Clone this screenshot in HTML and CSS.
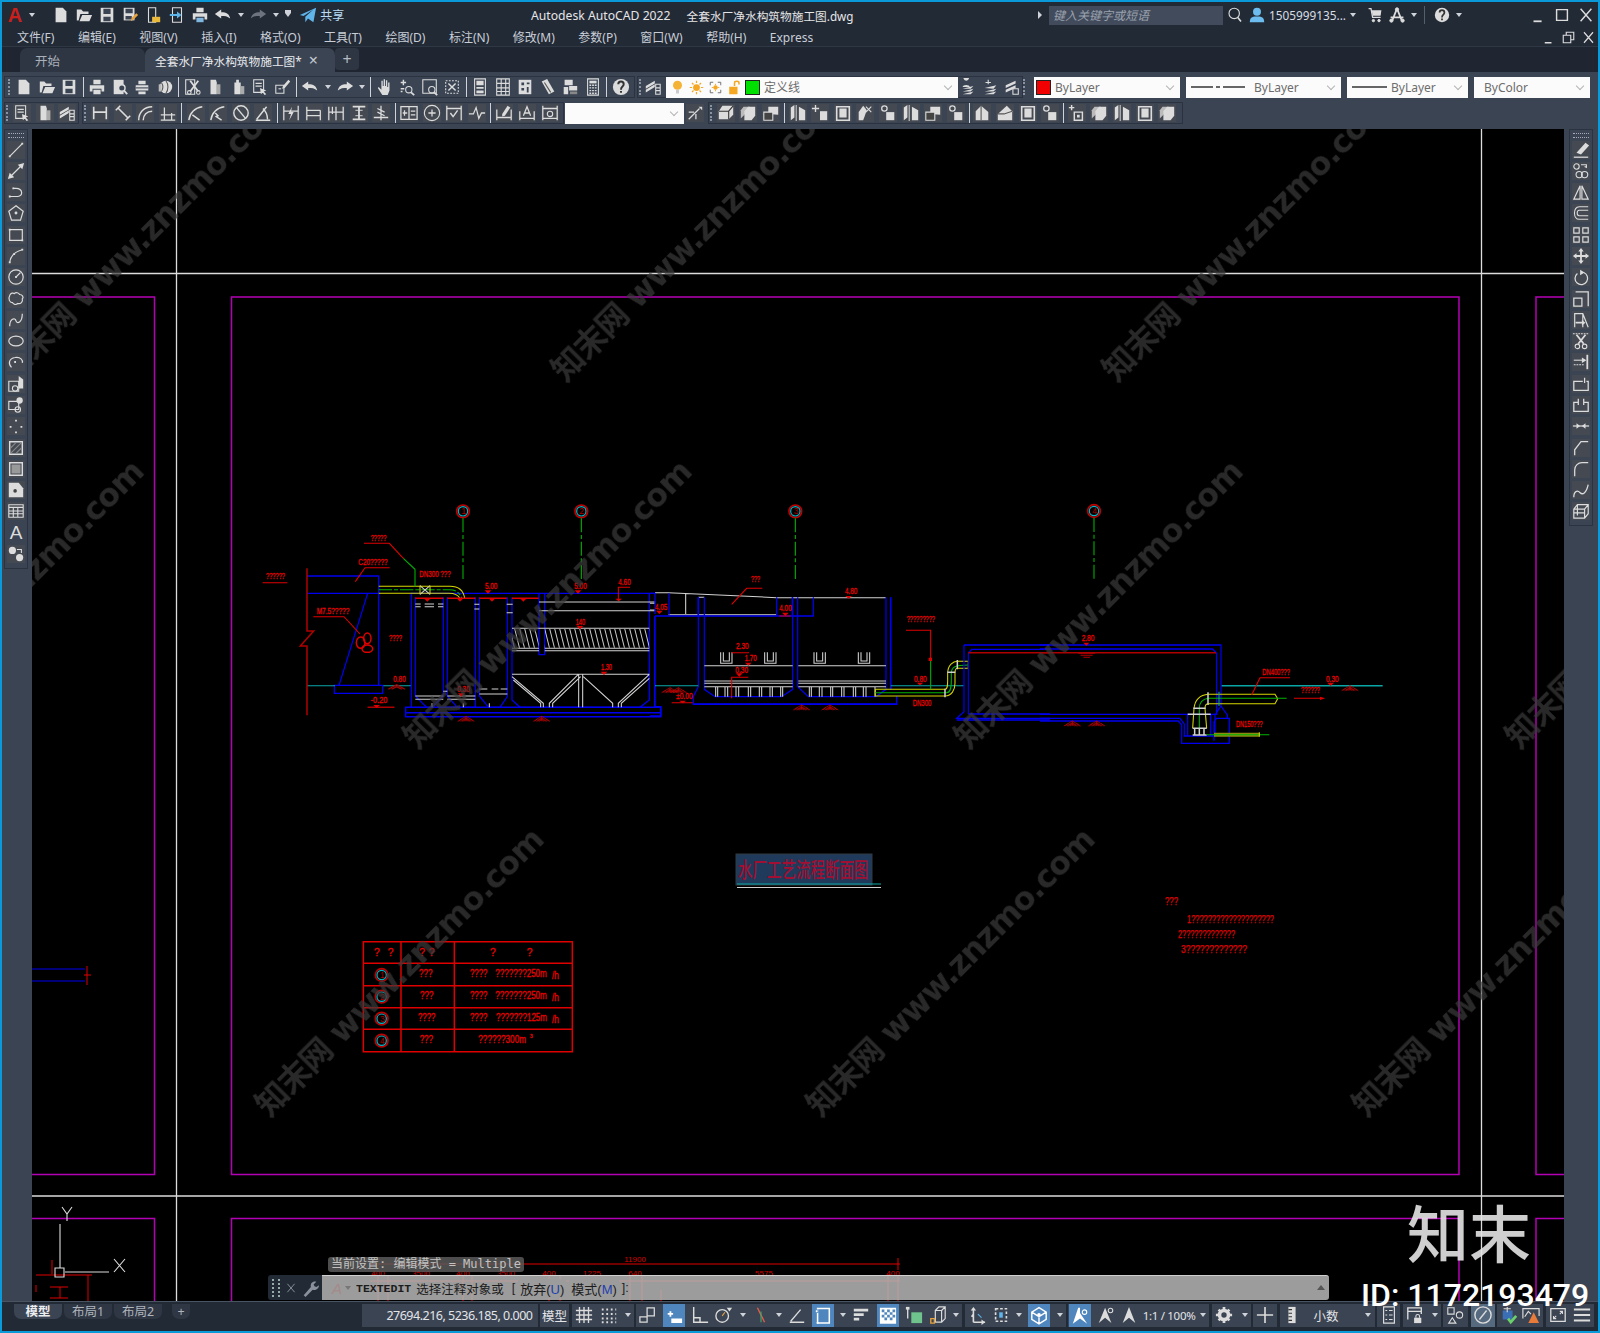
FILE: index.html
```html
<!DOCTYPE html>
<html lang="zh">
<head>
    <meta charset="UTF-8">
    <title>Autodesk AutoCAD 2022</title>
    <link rel="stylesheet" href="styles.css">
</head>
<body>
<svg class="defs" width="0" height="0">
    <symbol id="new" viewBox="0 0 20 20"><path fill="currentColor" stroke="none" d="M4 2h8l4 4v12H4z"/></symbol>
    <symbol id="open" viewBox="0 0 20 20"><path fill="currentColor" stroke="none" d="M2 16V4h5l2 2h6v3H6l-2 7zM5 17l3-7h11l-3 7z"/></symbol>
    <symbol id="save" viewBox="0 0 20 20"><path fill="currentColor" stroke="none" d="M3 2h14v16H3z"/><path fill="#3b4453" stroke="none" d="M6 3h8v6H6zM6 12h8v5H6z"/></symbol>
    <symbol id="saveas" viewBox="0 0 20 20"><path fill="currentColor" stroke="none" d="M3 2h12v14H3z"/><path fill="#3b4453" stroke="none" d="M5 3h8v5H5zM5 11h7v4H5z"/><path fill="#e8a33a" stroke="none" d="M11 17l1-4 5-5 2 2-5 5z"/></symbol>
    <symbol id="webopen" viewBox="0 0 20 20"><path d="M5 2h8v16H5z"/><path fill="#e8b93a" stroke="none" d="M9 12h9v6H9z"/></symbol>
    <symbol id="websave" viewBox="0 0 20 20"><path d="M5 2h10v16H5z"/><path fill="#5fb4ea" stroke="none" d="M2 9h8V6l5 4-5 4v-3H2z"/></symbol>
    <symbol id="print" viewBox="0 0 20 20"><path fill="currentColor" stroke="none" d="M6 2h8v5H6zM2 8h16v7h-3v-3H5v3H2z"/><path fill="#7fb6e0" stroke="none" d="M6 13h8v5H6z"/></symbol>
    <symbol id="printw" viewBox="0 0 20 20"><path fill="currentColor" stroke="none" d="M6 2h8v5H6zM2 8h16v7h-3v-3H5v3H2zM6 13h8v5H6z"/></symbol>
    <symbol id="undo" viewBox="0 0 20 20"><path fill="currentColor" stroke="none" d="M1 9l7-5v3c6 0 9 2 10 7-3-3-6-3-10-3v3z"/></symbol>
    <symbol id="redo" viewBox="0 0 20 20"><path fill="currentColor" stroke="none" d="M19 9l-7-5v3C6 7 3 9 2 14c3-3 6-3 10-3v3z"/></symbol>
    <symbol id="share" viewBox="0 0 20 20"><path fill="#5fb4ea" stroke="none" d="M1 10L19 2l-3 16-6-4-3 4v-6l9-8-11 7z"/></symbol>
    <symbol id="preview" viewBox="0 0 20 20"><path fill="currentColor" stroke="none" d="M3 2h11v16H3z"/><circle cx="12" cy="11" r="3.6" fill="#3b4453" stroke-width="1.6"/><path stroke-width="2" d="M14.5 14l3.5 4"/></symbol>
    <symbol id="plot" viewBox="0 0 20 20"><path fill="currentColor" stroke="none" d="M3 8h14v6H3zM6 3h8v4H6zM6 15h8v3H6z"/><path stroke="#3b4453" d="M3 11h14"/></symbol>
    <symbol id="publish" viewBox="0 0 20 20"><circle cx="11" cy="10" r="7" fill="currentColor" stroke="none"/><path stroke="#555" d="M6 5c2 3 2 7 0 10M11 3c3 4 3 10 0 14"/><path fill="#bbb" stroke="none" d="M3 7h3v8H3z"/></symbol>
    <symbol id="cut" viewBox="0 0 20 20"><path d="M3 2h10v16H3z"/><path stroke-width="2" d="M8 3l9 12M17 3L8 15"/><circle cx="7" cy="16" r="2"/><circle cx="17" cy="16" r="2"/></symbol>
    <symbol id="copy" viewBox="0 0 20 20"><path fill="currentColor" stroke="none" d="M5 2h6l1 3v13H5z"/><path fill="#aaa" stroke="none" d="M12 7h4v11h-4z"/></symbol>
    <symbol id="paste" viewBox="0 0 20 20"><path fill="currentColor" stroke="none" d="M6 5h2V2h3v3h2v13H6z"/><path fill="#aaa" stroke="none" d="M13 9h4v9h-4z"/></symbol>
    <symbol id="match" viewBox="0 0 20 20"><path d="M3 2h11v14H3zM5 6h7M5 9h7"/><path fill="currentColor" stroke="none" d="M10 11l7 3-3 1 3 3-2 1-2-3-2 2z"/></symbol>
    <symbol id="matchp" viewBox="0 0 20 20"><path d="M2 8h9v9H2z"/><path d="M5 12h3"/><path fill="currentColor" stroke="none" d="M10 9l6-7 2 2-6 7-3 1z"/></symbol>
    <symbol id="pan" viewBox="0 0 20 20"><path fill="currentColor" stroke="none" d="M7 19L2 11l1-1 3 3V3h1.500v6H8.500V1.500H10V9h1V2.500h1.500V10h1V5H15v9l-2 5z"/></symbol>
    <symbol id="zoomr" viewBox="0 0 20 20"><path stroke-width="1.600" d="M6 2v6M3 5h6M3 12h4M3 15h2"/><circle cx="12" cy="13" r="3.500"/><path stroke-width="2" d="M14.500 16l3.500 3"/></symbol>
    <symbol id="zoomw" viewBox="0 0 20 20"><path d="M2 2h15v15H2z"/><circle cx="12" cy="13" r="3.500"/><path stroke-width="2" d="M14.500 16l3.500 3"/></symbol>
    <symbol id="zoome" viewBox="0 0 20 20"><path stroke-dasharray="2 1.500" d="M3 3h14v14H3z"/><path stroke-width="1.600" d="M6 6l8 8M14 6l-8 8"/></symbol>
    <symbol id="props" viewBox="0 0 20 20"><path d="M4 1h12v18H4z"/><path fill="currentColor" stroke="none" d="M6 3h8v5H6zM6 10h8v2H6zM6 14h8v3H6z"/></symbol>
    <symbol id="sheet" viewBox="0 0 20 20"><path d="M3 1h14v18H3zM8 1v18M13 1v18M3 6h14M3 11h14M3 15h14"/></symbol>
    <symbol id="palette" viewBox="0 0 20 20"><path fill="currentColor" stroke="none" d="M3 2h14v16H3z"/><path fill="#3b4453" stroke="none" d="M6 5h3v3H6zM12 5h3v2h-3zM6 11h3v3H6zM12 10h2v6h-2z"/></symbol>
    <symbol id="markup" viewBox="0 0 20 20"><path fill="currentColor" stroke="none" d="M3 4l6-3 8 14-6 3z"/><path stroke="#555" d="M6 5l7 11"/></symbol>
    <symbol id="sset" viewBox="0 0 20 20"><path fill="currentColor" stroke="none" d="M4 2h9v6H4zM9 9h9v5H9zM3 10h5v8H3z"/><path fill="#888" stroke="none" d="M10 15h8v3h-8z"/></symbol>
    <symbol id="calc" viewBox="0 0 20 20"><path d="M4 1h12v18H4z"/><path stroke-width="1.600" stroke-dasharray="2 1" d="M6 8h8M6 11h8M6 14h8M6 17h8"/><path fill="currentColor" stroke="none" d="M6 3h8v3H6z"/></symbol>
    <symbol id="help" viewBox="0 0 20 20"><circle cx="10" cy="10" r="9" fill="currentColor" stroke="none"/><path fill="none" stroke="#333" stroke-width="2.200" d="M7 7c0-4 6-4 6 0 0 3-3 2-3 6"/><path stroke="#333" stroke-width="2.200" d="M10 14.500v2"/></symbol>
    <symbol id="layer" viewBox="0 0 20 20"><path fill="currentColor" stroke="none" d="M2 9l10-6v3L2 12zM2 13l10-6v3L2 16z"/><path d="M13 7h5v11h-5zM13 11h5M13 14h5"/></symbol>
    <symbol id="lstack" viewBox="0 0 20 20"><path fill="currentColor" stroke="none" d="M4 12l12-3-3 3zM4 15l12-3-3 3zM4 18l12-3-3 3z"/><path fill="currentColor" stroke="none" d="M8 3a3 3 0 1 1 .1 0zM4 10c0-3 8-3 8 0z"/></symbol>
    <symbol id="lstack2" viewBox="0 0 20 20"><path fill="currentColor" stroke="none" d="M4 11l13-3-3 4zM4 15l13-3-3 3zM4 18l13-3-3 3z"/><path stroke="#ddd" d="M8 2v5M5 5h6"/></symbol>
    <symbol id="lstack3" viewBox="0 0 20 20"><path fill="currentColor" stroke="none" d="M3 8l11-5v3L3 11zM3 13l11-5v3L3 16z"/><path d="M11 12h6v6h-6z"/></symbol>
    <symbol id="bulb" viewBox="0 0 20 20"><circle cx="10" cy="7" r="6" fill="#f5b335" stroke="none"/><path fill="#ccc" stroke="none" d="M8 13h4v5H8z"/></symbol>
    <symbol id="sun" viewBox="0 0 20 20"><circle cx="10" cy="10" r="4.500" fill="#f5a623" stroke="none"/><path stroke="#f5a623" stroke-width="1.600" d="M10 1v3M10 16v3M1 10h3M16 10h3M4 4l2 2M14 14l2 2M4 16l2-2M14 6l2-2"/></symbol>
    <symbol id="vpfreeze" viewBox="0 0 20 20"><path stroke="#666" d="M3 7V3h4M13 3h4v4M17 13v4h-4M7 17H3v-4"/><circle cx="10" cy="10" r="3" fill="#f5a623" stroke="none"/><path stroke="#f5a623" d="M10 5v2M10 13v2M5 10h2M13 10h2"/></symbol>
    <symbol id="lock" viewBox="0 0 20 20"><path fill="#f5a623" stroke="none" d="M3 9h11v10H3z"/><path stroke="#f5a623" stroke-width="2" d="M10 8V4c0-3 6-3 6 0v2"/></symbol>
    <symbol id="dlin" viewBox="0 0 20 20"><path stroke-width="1.800" d="M3 3v14M17 3v14M3 9h14"/></symbol>
    <symbol id="dali" viewBox="0 0 20 20"><path stroke-width="1.800" d="M2 7l5-5M13 18l5-5M5 5l10 10"/></symbol>
    <symbol id="darc" viewBox="0 0 20 20"><path stroke-width="1.600" d="M3 18C3 9 9 3 18 3M8 18C8 12 12 8 18 8"/></symbol>
    <symbol id="dord" viewBox="0 0 20 20"><path stroke-width="1.400" d="M2 12h16M2 18h16M6 4v14M14 10v8"/></symbol>
    <symbol id="dradius" viewBox="0 0 20 20"><path stroke-width="1.600" d="M2 18C3 10 9 4 17 3M6 12l8 6"/></symbol>
    <symbol id="djog" viewBox="0 0 20 20"><path stroke-width="1.600" d="M2 18C3 10 9 4 17 3M7 10l3 3-2 1 6 4"/></symbol>
    <symbol id="ddia" viewBox="0 0 20 20"><circle cx="10" cy="10" r="8" stroke-width="1.600"/><path stroke-width="1.600" d="M5 4l10 12"/></symbol>
    <symbol id="dang" viewBox="0 0 20 20"><path stroke-width="1.600" d="M2 18h16M3 17L14 3M10 5c3 3 5 7 5 12"/></symbol>
    <symbol id="dquick" viewBox="0 0 20 20"><path stroke-width="1.400" d="M2 2v16M18 2v16M2 8h16"/><path fill="currentColor" stroke="none" d="M11 3l-4 8h3l-2 7 5-9h-3z"/></symbol>
    <symbol id="dbase" viewBox="0 0 20 20"><path stroke-width="1.400" d="M2 3v15M17 7v11M2 7h15M2 13h15"/></symbol>
    <symbol id="dcont" viewBox="0 0 20 20"><path stroke-width="1.400" d="M2 3v15M10 3v15M18 3v15M2 9h16M6 3v8"/></symbol>
    <symbol id="dspace" viewBox="0 0 20 20"><path stroke-width="2" d="M3 3h14M3 17h14M10 3v14"/><path stroke-width="1" d="M6 7h8M6 13h8"/></symbol>
    <symbol id="dbreak" viewBox="0 0 20 20"><path stroke-width="1.400" d="M2 15h16M10 2v16M6 5l8 4M6 9l8 4"/></symbol>
    <symbol id="tol" viewBox="0 0 20 20"><path stroke-width="1.400" d="M1 3h18v14H1zM10 3v14M3 10h5M5 7v6M12 8h5M12 12h5"/></symbol>
    <symbol id="center" viewBox="0 0 20 20"><circle cx="10" cy="10" r="8.500"/><path stroke-width="1.400" d="M10 6v8M6 10h8"/></symbol>
    <symbol id="inspect" viewBox="0 0 20 20"><path stroke-width="1.400" d="M2 2v16M18 2v16M2 5h16"/><path d="M6 10l3 4 5-7" stroke-width="1.600"/></symbol>
    <symbol id="jog" viewBox="0 0 20 20"><path stroke-width="1.400" d="M1 11h5l3-7 3 12 3-6h4"/></symbol>
    <symbol id="dedit" viewBox="0 0 20 20"><path stroke-width="1.400" d="M2 6v12M18 6v12M2 15h16"/><path fill="currentColor" stroke="none" d="M8 11l6-9 3 2-6 9-3 1z"/></symbol>
    <symbol id="dtext" viewBox="0 0 20 20"><path stroke-width="1.400" d="M2 8v10M18 8v10M2 16h16M6 13l4-10 4 10M7.500 10h5"/></symbol>
    <symbol id="dupd" viewBox="0 0 20 20"><path stroke-width="1.400" d="M2 2v16M18 2v16M2 5h16M2 16h16"/><circle cx="10" cy="11" r="3"/></symbol>
    <symbol id="dstyle" viewBox="0 0 20 20"><path stroke-width="1.400" d="M3 17l12-12M3 9h6M11 17v-6"/><path fill="currentColor" stroke="none" d="M14 3h4v4z"/></symbol>
    <symbol id="box3" viewBox="0 0 20 20"><path fill="currentColor" stroke="none" d="M2 17V8l4-6h12v10l-5 5z"/><path stroke="#333" d="M2 8h11v9M13 8l5-6"/></symbol>
    <symbol id="box3b" viewBox="0 0 20 20"><path fill="#bbb" stroke="none" d="M2 16V7l3-4h7l-1 4z"/><path fill="currentColor" stroke="none" d="M6 18V8l4-5h8v10l-4 5z"/></symbol>
    <symbol id="box3c" viewBox="0 0 20 20"><path fill="currentColor" stroke="none" d="M7 11V3h11v9z"/><path d="M2 18V9h10v9z" fill="#444"/></symbol>
    <symbol id="wedge" viewBox="0 0 20 20"><path fill="currentColor" stroke="none" d="M2 18V4l4-3v14zM11 18V3l7 4v11z"/><path stroke="#ccc" d="M8 1v18"/></symbol>
    <symbol id="boxplus" viewBox="0 0 20 20"><path stroke-width="1.600" d="M1 4h6M4 1v6M7 9h9v9H7z"/><path fill="currentColor" stroke="none" d="M10 12h3v3h-3z"/></symbol>
    <symbol id="movebox" viewBox="0 0 20 20"><path stroke-width="1.500" d="M5 1v8M1 5h8"/><path fill="currentColor" stroke="none" d="M10 8h8v10h-8z"/></symbol>
    <symbol id="rect3" viewBox="0 0 20 20"><path d="M3 3h14v15H3z" stroke-width="1.800"/><path fill="currentColor" stroke="none" d="M6 5h8v10H6z"/></symbol>
    <symbol id="cutbox" viewBox="0 0 20 20"><path fill="currentColor" stroke="none" d="M3 18V9l5-7 4 5-4 11z"/><path stroke="#ddd" d="M11 3l6 6M17 3l-6 6"/></symbol>
    <symbol id="rotbox" viewBox="0 0 20 20"><circle cx="6" cy="5" r="3" stroke-width="1.400"/><path fill="currentColor" stroke="none" d="M8 9h9v9H8z"/></symbol>
    <symbol id="round3" viewBox="0 0 20 20"><path fill="currentColor" stroke="none" d="M3 18V8l6-6 8 7v9z"/><path stroke="#555" d="M9 2v16"/></symbol>
    <symbol id="wedge2" viewBox="0 0 20 20"><path fill="currentColor" stroke="none" d="M2 18V11L12 2l6 6v10z"/><path stroke="#555" d="M2 11h7l9-3"/></symbol>
    <symbol id="ln" viewBox="0 0 20 20"><path stroke-width="1.300" d="M3 17L17 3"/><path fill="currentColor" stroke="none" d="M2 16h2v2H2zM16 2h2v2h-2z"/></symbol>
    <symbol id="xln" viewBox="0 0 20 20"><path stroke-width="1.300" d="M5 15L15 5"/><path fill="currentColor" stroke="none" d="M1 19l2-7 5 5zM19 1l-2 7-5-5z"/></symbol>
    <symbol id="pln" viewBox="0 0 20 20"><path stroke-width="1.300" d="M3 15h9c6 0 6-9-2-9H7"/><path fill="currentColor" stroke="none" d="M2 14h2v2H2zM6 5h2v2H6z"/></symbol>
    <symbol id="pgon" viewBox="0 0 20 20"><path stroke-width="1.300" d="M10 2l8 6-3 10H5L2 8z"/><circle cx="10" cy="10" r="1" fill="currentColor"/></symbol>
    <symbol id="rec" viewBox="0 0 20 20"><path stroke-width="1.300" d="M3 4h14v12H3z"/><path fill="currentColor" stroke="none" d="M2 3h2v2H2zM16 15h2v2h-2z"/></symbol>
    <symbol id="arc" viewBox="0 0 20 20"><path stroke-width="1.300" d="M3 17C4 10 9 5 17 3"/><path fill="currentColor" stroke="none" d="M2 16h2v2H2zM7 7h2v2H7zM16 2h2v2h-2z"/></symbol>
    <symbol id="cir" viewBox="0 0 20 20"><circle cx="10" cy="10" r="8" stroke-width="1.300"/><path d="M10 10l5-5"/><path fill="currentColor" stroke="none" d="M9 9h2v2H9z"/></symbol>
    <symbol id="cloud" viewBox="0 0 20 20"><path stroke-width="1.300" d="M3 6c1-3 4-3 5-2 2-2 5-1 6 1 3 0 5 3 3 5 1 3-2 6-5 5-2 2-5 1-6-1-3 0-5-4-3-8z"/></symbol>
    <symbol id="spl" viewBox="0 0 20 20"><path stroke-width="1.300" d="M3 17C3 8 9 7 10 11s7 2 7-8"/></symbol>
    <symbol id="ell" viewBox="0 0 20 20"><ellipse cx="10" cy="10" rx="8" ry="5.500" stroke-width="1.300"/></symbol>
    <symbol id="ellarc" viewBox="0 0 20 20"><path stroke-width="1.300" d="M5 16C1 12 2 6 9 5c6-1 9 3 8 6"/><path fill="currentColor" stroke="none" d="M8 9h2v2H8z"/></symbol>
    <symbol id="insert" viewBox="0 0 20 20"><path d="M2 7h11v11H2z"/><path fill="currentColor" stroke="none" d="M13 1l5 4v10h-5z"/><circle cx="9" cy="15" r="3"/></symbol>
    <symbol id="mkblock" viewBox="0 0 20 20"><path d="M2 6h11v9H2z"/><circle cx="14" cy="5" r="3.500" fill="currentColor" stroke="none"/><circle cx="12" cy="15" r="3"/></symbol>
    <symbol id="pts" viewBox="0 0 20 20"><path fill="currentColor" stroke="none" d="M9 3h2v2H9zM3 10h2v2H3zM15 10h2v2h-2zM9 16h2v2H9z"/></symbol>
    <symbol id="hatch" viewBox="0 0 20 20"><path d="M3 3h14v14H3z" stroke-width="1.600"/><path stroke="#888" d="M4 10l6-6M4 16L16 4M10 16l6-6"/></symbol>
    <symbol id="grad" viewBox="0 0 20 20"><path d="M3 3h14v14H3z" stroke-width="1.600"/><path fill="#999" stroke="none" d="M5 5h10v10H5z"/></symbol>
    <symbol id="region" viewBox="0 0 20 20"><path fill="currentColor" stroke="none" d="M2 2h11l5 6v10H2z"/><circle cx="9" cy="11" r="2" fill="#444" stroke="none"/></symbol>
    <symbol id="table" viewBox="0 0 20 20"><path d="M2 3h16v14H2zM2 6h16M2 10h16M2 13h16M7 6v11M12 6v11" stroke-width="1.200"/></symbol>
    <symbol id="attr" viewBox="0 0 20 20"><circle cx="6" cy="6" r="4" fill="currentColor" stroke="none"/><circle cx="14" cy="14" r="4" fill="currentColor" stroke="none"/><path d="M11 5h5v4"/></symbol>
    <symbol id="erase" viewBox="0 0 20 20"><path fill="currentColor" stroke="none" d="M5 13L15 2l4 3-9 10z"/><path stroke-width="1.400" d="M2 18h16"/></symbol>
    <symbol id="cpy" viewBox="0 0 20 20"><circle cx="5" cy="5" r="3"/><path d="M10 3h6v3l-2-1"/><circle cx="8" cy="14" r="3.500"/><circle cx="14" cy="14" r="3.500"/></symbol>
    <symbol id="mirror" viewBox="0 0 20 20"><path stroke-width="1.300" d="M9 3L2 18h7zM11 3l7 15h-7z"/></symbol>
    <symbol id="offs" viewBox="0 0 20 20"><path stroke-width="1.200" d="M18 3H8C1 3 1 17 8 17h10M18 7H8c-3 0-3 6 0 6h10"/></symbol>
    <symbol id="arr" viewBox="0 0 20 20"><path stroke-width="1.300" d="M2 2h6v6H2zM12 2h6v6h-6zM2 12h6v6H2zM12 12h6v6h-6z"/></symbol>
    <symbol id="mv" viewBox="0 0 20 20"><path fill="currentColor" stroke="none" d="M10 1l3 4h-2v4h4V7l4 3-4 3v-2h-4v4h2l-3 4-3-4h2v-4H5v2l-4-3 4-3v2h4V5H7z"/></symbol>
    <symbol id="rot" viewBox="0 0 20 20"><path stroke-width="1.400" d="M13 5a7 7 0 1 1-7 1"/><path fill="currentColor" stroke="none" d="M9 2l5 3-5 3z"/></symbol>
    <symbol id="scl" viewBox="0 0 20 20"><path stroke-width="1.400" d="M2 9h9v9H2zM4 2h14v16"/></symbol>
    <symbol id="stretch" viewBox="0 0 20 20"><path stroke-width="1.300" d="M3 18V3h9l6 15M12 3v15"/><path fill="currentColor" stroke="none" d="M4 12h7v-2l4 3-4 3v-2H4z"/></symbol>
    <symbol id="trm" viewBox="0 0 20 20"><path stroke-dasharray="2 1" d="M1 2h18"/><path stroke-width="2" d="M5 3l8 10M15 3L7 13"/><circle cx="6" cy="16" r="2.500"/><circle cx="14" cy="16" r="2.500"/></symbol>
    <symbol id="ext" viewBox="0 0 20 20"><path stroke-width="2" d="M17 2v16"/><path stroke-dasharray="2 1" d="M2 13h12"/><path d="M2 8h10"/><path fill="currentColor" stroke="none" d="M11 5l5 3-5 3z"/></symbol>
    <symbol id="brk" viewBox="0 0 20 20"><path stroke-width="1.400" d="M12 7H2v10h16V7h-2M14 3v6"/></symbol>
    <symbol id="brk2" viewBox="0 0 20 20"><path stroke-width="1.400" d="M7 7H2v10h16V7h-5M7 3v7M13 3v7"/></symbol>
    <symbol id="jn" viewBox="0 0 20 20"><path stroke-width="1.400" d="M1 10h18"/><path fill="currentColor" stroke="none" d="M5 7l4 3-4 3zM15 7l-4 3 4 3z"/></symbol>
    <symbol id="chm" viewBox="0 0 20 20"><path stroke-width="1.400" d="M3 18v-6l7-9h8"/></symbol>
    <symbol id="flt" viewBox="0 0 20 20"><path stroke-width="1.400" d="M3 18v-7c0-5 4-8 8-8h7"/></symbol>
    <symbol id="blnd" viewBox="0 0 20 20"><path stroke-width="1.400" d="M2 18c0-7 4-8 7-5s7 0 9-9"/></symbol>
    <symbol id="expl" viewBox="0 0 20 20"><path stroke-width="1.300" d="M2 8l4-5h12v10l-4 5H2zM2 8h12v10M14 8l4-5"/><path stroke-width="1.300" d="M6 3v12M2 12h12"/></symbol>
    <symbol id="grid" viewBox="0 0 20 20"><path stroke-width="1.500" d="M5 1v18M10 1v18M15 1v18M1 5h18M1 10h18M1 15h18"/></symbol>
    <symbol id="snap" viewBox="0 0 20 20"><path stroke-width="2.200" stroke-dasharray="2 3" d="M2 4h16M2 9h16M2 14h16M2 18h16"/></symbol>
    <symbol id="infer" viewBox="0 0 20 20"><path stroke-width="1.400" d="M1 18h8v-6H1zM9 12V2h8v9H9"/></symbol>
    <symbol id="dyn" viewBox="0 0 20 20"><path stroke-width="2" d="M3 8h6M6 5v6"/><path fill="currentColor" stroke="none" d="M7 13h12v5H7z"/></symbol>
    <symbol id="ortho" viewBox="0 0 20 20"><path stroke-width="1.600" d="M3 1v17h16M3 13h7v5"/></symbol>
    <symbol id="polar" viewBox="0 0 20 20"><circle cx="8" cy="11" r="7" stroke-width="1.500"/><path stroke="#e8a33a" d="M8 11l3-4"/><path fill="currentColor" stroke="none" d="M13 2h6l-3 4z"/></symbol>
    <symbol id="iso" viewBox="0 0 20 20"><path stroke="#e85b4a" stroke-width="1.500" d="M6 2l8 16"/><path stroke="#3fae6a" d="M10 6v12"/></symbol>
    <symbol id="osnap" viewBox="0 0 20 20"><path stroke-width="1.500" d="M2 18h16M3 17L14 4"/></symbol>
    <symbol id="ortho3" viewBox="0 0 20 20"><path stroke-width="1.700" d="M4 2h13v16H4z"/><path fill="#4f86bd" stroke="none" d="M1 3h4v4H1z"/><path fill="#fff" stroke="none" d="M2 4h2v2H2zM3 17h2v2H3z"/></symbol>
    <symbol id="lw" viewBox="0 0 20 20"><path fill="currentColor" stroke="none" d="M2 3h16v3H2zM2 8h11v3H2zM2 13h6v3H2z"/></symbol>
    <symbol id="trans" viewBox="0 0 20 20"><path fill="currentColor" stroke="none" d="M1 1h18v18H1z"/><path fill="#4f86bd" stroke="none" d="M3 3h3v3H3zM9 3h3v3H9zM15 3h3v3h-3zM6 6h3v3H6zM12 6h3v3h-3zM3 9h3v3H3zM9 9h3v3H9zM15 9h3v3h-3zM6 12h3v3H6zM12 12h3v3h-3z"/></symbol>
    <symbol id="cycle" viewBox="0 0 20 20"><path fill="#6fc38c" stroke="none" d="M7 7h12v12H7z"/><path stroke-width="1.500" d="M3 2v12"/><path fill="currentColor" stroke="none" d="M1 1h4v3H1z"/></symbol>
    <symbol id="obj3" viewBox="0 0 20 20"><path stroke-width="1.300" d="M7 5l4-4h7v13l-4 4H7zM7 5h7v13M14 5l4-4"/><path stroke="#e8a33a" stroke-width="1.500" d="M2 14h4v5H2z"/></symbol>
    <symbol id="dynucs" viewBox="0 0 20 20"><path stroke-width="1.800" d="M6 18V3M6 18h13M6 9l-2 3"/><path fill="currentColor" stroke="none" d="M6 1l3 4H3zM19 18l-4 3v-6z"/><path stroke="#5fb4ea" d="M11 9l4 4"/></symbol>
    <symbol id="sel" viewBox="0 0 20 20"><path stroke-width="1.800" stroke-dasharray="3 2" d="M4 3h12v14H4z"/><path fill="#5fb4ea" stroke="none" d="M8 7h4v6H8z"/></symbol>
    <symbol id="gizmo" viewBox="0 0 20 20"><path stroke-width="1.600" d="M10 1l8 5v8l-8 5-8-5V6zM2 6l8 5 8-5M10 11v8"/><circle cx="10" cy="9" r="2" fill="currentColor" stroke="none"/></symbol>
    <symbol id="annos" viewBox="0 0 20 20"><path fill="currentColor" stroke="none" d="M8 1h2v6l8 12-8-6-8 6z"/><circle cx="15" cy="6" r="2.500"/></symbol>
    <symbol id="annos2" viewBox="0 0 20 20"><path fill="currentColor" stroke="none" d="M9 2l7 17-7-6-7 6z"/><circle cx="15" cy="5" r="2.500"/></symbol>
    <symbol id="annos3" viewBox="0 0 20 20"><path fill="currentColor" stroke="none" d="M10 1l7 18-7-6-7 6z"/></symbol>
    <symbol id="gear" viewBox="0 0 20 20"><circle cx="10" cy="10" r="5" stroke-width="4"/><path stroke-width="3" d="M10 1v3M10 16v3M1 10h3M16 10h3M4 4l2 2M14 14l2 2M4 16l2-2M14 6l2-2"/></symbol>
    <symbol id="plus" viewBox="0 0 20 20"><path stroke-width="1.800" d="M10 1v18M1 10h18"/></symbol>
    <symbol id="ruler" viewBox="0 0 20 20"><path fill="currentColor" stroke="none" d="M6 1h8v18H6z"/><path stroke="#333" d="M6 4h4M6 8h4M6 12h4M6 16h4"/></symbol>
    <symbol id="qprops" viewBox="0 0 20 20"><path stroke-width="1.300" d="M4 1h12v18H4zM6 5h2M10 5h4M6 10h2M10 10h4M6 15h2M10 15h4"/></symbol>
    <symbol id="lockui" viewBox="0 0 20 20"><path stroke-width="1.500" d="M2 15V2h15v7M2 6h15"/><path fill="currentColor" stroke="none" d="M9 13h8v6H9z"/><path d="M11 13v-2c0-2 4-2 4 0v2"/></symbol>
    <symbol id="isolate" viewBox="0 0 20 20"><path stroke-width="1.200" d="M2 2h7v7H2zM7 13l-4 6h8z"/><circle cx="15" cy="10" r="3.500"/></symbol>
    <symbol id="hw" viewBox="0 0 20 20"><circle cx="10" cy="10" r="9" stroke-width="1.600"/><path stroke-width="1.500" d="M6 15l8-10"/></symbol>
    <symbol id="net" viewBox="0 0 20 20"><path fill="#3a6fb5" stroke="none" d="M3 5h11v10H3z"/><path stroke="#ddd" d="M8 1v6M4 3h8"/><path stroke="#6bd06b" stroke-width="3" d="M9 14l3 4 6-7"/></symbol>
    <symbol id="warn" viewBox="0 0 20 20"><path stroke-width="1.300" d="M1 14V3h18v8"/><path stroke-width="1.300" d="M3 12l4-6 3 3"/><path fill="#e87a3a" stroke="none" d="M13 7l6 12H7z"/></symbol>
    <symbol id="full" viewBox="0 0 20 20"><path stroke-width="1.400" d="M2 3h16v14H2z"/><path stroke-width="1.200" d="M5 14l3-3M5 11v3h3M15 6l-3 3M12 6h3v3"/></symbol>
    <symbol id="burger" viewBox="0 0 20 20"><path stroke-width="2.200" d="M1 4h18M1 10h18M1 16h18"/></symbol>
    <symbol id="search" viewBox="0 0 20 20"><circle cx="9" cy="8" r="6.500" stroke-width="1.400"/><path stroke-width="2" d="M13.500 13l4 5"/></symbol>
    <symbol id="user" viewBox="0 0 20 20"><circle cx="10" cy="6" r="5" fill="#6cbcf0" stroke="none"/><path fill="#6cbcf0" stroke="none" d="M1 19c0-7 5-7 9-7s9 0 9 7z"/></symbol>
    <symbol id="cart" viewBox="0 0 20 20"><path stroke-width="1.600" d="M2 2h3l2 11h10"/><path fill="currentColor" stroke="none" d="M6 4h12l-1 7H7z"/><circle cx="8" cy="17" r="1.500" fill="currentColor"/><circle cx="15" cy="17" r="1.500" fill="currentColor"/></symbol>
    <symbol id="connect" viewBox="0 0 20 20"><path stroke-width="2.200" d="M10 2L4 17M10 2l6 15M2 13h16"/><circle cx="10" cy="3" r="2" fill="currentColor"/><circle cx="3" cy="17" r="2" fill="currentColor"/><circle cx="17" cy="17" r="2" fill="currentColor"/></symbol>
    <symbol id="min" viewBox="0 0 20 20"><path stroke-width="2" d="M5 17h9"/></symbol>
    <symbol id="max" viewBox="0 0 20 20"><path stroke-width="1.600" d="M4 4h12v12H4z"/></symbol>
    <symbol id="close" viewBox="0 0 20 20"><path stroke-width="1.600" d="M4 3l12 14M16 3L4 17"/></symbol>
    <symbol id="restore" viewBox="0 0 20 20"><path stroke-width="1.500" d="M3 7h10v10H3zM7 7V3h10v10h-4"/></symbol>
    <symbol id="gnd" viewBox="0 0 50 16" overflow="visible"><path fill="none" stroke="#c80000" stroke-width="2.200" d="M0 16L25 1l25 15M9 16L25 6l16 10M18 16l7-5 7 5M25 1v15M13 16L25 8M37 16L25 8M4 16L12 8M46 16L38 8"/></symbol>
    <pattern id="tubes" width="15" height="60" patternUnits="userSpaceOnUse"><path d="M0 0L15 60M-15 0L0 60M15 0L30 60" stroke="#d0d0d0" stroke-width="3" fill="none"/></pattern>
</svg>

<div class="app">
    <header class="titlebar">
        <span class="logo">A</span><span class="caret"></span>
        <div class="qat">
            <svg class="ic"><use href="#new"/></svg>
            <svg class="ic"><use href="#open"/></svg>
            <svg class="ic"><use href="#save"/></svg>
            <svg class="ic"><use href="#saveas"/></svg>
            <svg class="ic"><use href="#webopen"/></svg>
            <svg class="ic"><use href="#websave"/></svg>
            <svg class="ic"><use href="#print"/></svg>
            <svg class="ic"><use href="#undo"/></svg><span class="caret"></span>
            <svg class="ic off"><use href="#redo"/></svg><span class="caret"></span>
            <span class="caret bar"></span>
            <svg class="ic"><use href="#share"/></svg>
            <span class="share">共享</span>
        </div>
        <div class="title"><span>Autodesk AutoCAD 2022</span><span class="title-doc">全套水厂净水构筑物施工图.dwg</span></div>
        <div class="infocenter">
            <span class="more"></span>
            <div class="search">键入关键字或短语</div>
            <svg class="ic"><use href="#search"/></svg>
            <svg class="ic"><use href="#user"/></svg>
            <span class="account">1505999135...</span><span class="caret"></span>
            <svg class="ic"><use href="#cart"/></svg>
            <svg class="ic"><use href="#connect"/></svg><span class="caret"></span>
            <span class="vsep"></span>
            <svg class="ic"><use href="#help"/></svg><span class="caret"></span>
            <div class="winbtns">
                <svg class="ic"><use href="#min"/></svg>
                <svg class="ic"><use href="#max"/></svg>
                <svg class="ic"><use href="#close"/></svg>
            </div>
        </div>
    </header>

    <nav class="menubar">
        <span>文件(F)</span><span>编辑(E)</span><span>视图(V)</span><span>插入(I)</span><span>格式(O)</span><span>工具(T)</span><span>绘图(D)</span><span>标注(N)</span><span>修改(M)</span><span>参数(P)</span><span>窗口(W)</span><span>帮助(H)</span><span>Express</span>
        <div class="docbtns">
            <svg class="ic"><use href="#min"/></svg>
            <svg class="ic"><use href="#restore"/></svg>
            <svg class="ic"><use href="#close"/></svg>
        </div>
    </nav>

    <div class="tabs">
        <div class="tab">开始</div>
        <div class="tab active">全套水厂净水构筑物施工图*<span class="x">×</span></div>
        <div class="tab-add">+</div>
    </div>

    <section class="toolbars">
        <div class="row">
            <div class="panel p-std">
                <svg class="ic"><use href="#new"/></svg>
                <svg class="ic"><use href="#open"/></svg>
                <svg class="ic"><use href="#save"/></svg>
                <span class="sep"></span>
                <svg class="ic"><use href="#printw"/></svg>
                <svg class="ic"><use href="#preview"/></svg>
                <svg class="ic"><use href="#plot"/></svg>
                <svg class="ic"><use href="#publish"/></svg>
                <span class="sep"></span>
                <svg class="ic"><use href="#cut"/></svg>
                <svg class="ic"><use href="#copy"/></svg>
                <svg class="ic"><use href="#paste"/></svg>
                <svg class="ic"><use href="#match"/></svg>
                <svg class="ic"><use href="#matchp"/></svg>
                <span class="sep"></span>
                <svg class="ic"><use href="#undo"/></svg><span class="caret"></span>
                <svg class="ic"><use href="#redo"/></svg><span class="caret"></span>
                <span class="sep"></span>
                <svg class="ic"><use href="#pan"/></svg>
                <svg class="ic"><use href="#zoomr"/></svg>
                <svg class="ic"><use href="#zoomw"/></svg>
                <svg class="ic"><use href="#zoome"/></svg>
                <span class="sep"></span>
                <svg class="ic"><use href="#props"/></svg>
                <svg class="ic"><use href="#sheet"/></svg>
                <svg class="ic"><use href="#palette"/></svg>
                <svg class="ic"><use href="#markup"/></svg>
                <svg class="ic"><use href="#sset"/></svg>
                <svg class="ic"><use href="#calc"/></svg>
                <span class="sep"></span>
                <svg class="ic"><use href="#help"/></svg>
            </div>
            <div class="panel p-layer">
                <svg class="ic"><use href="#layer"/></svg>
                <div class="combo layercombo">
                    <svg class="ic"><use href="#bulb"/></svg>
                    <svg class="ic"><use href="#sun"/></svg>
                    <svg class="ic"><use href="#vpfreeze"/></svg>
                    <svg class="ic"><use href="#lock"/></svg>
                    <span class="swatch green"></span>
                    <span>定义线</span>
                </div>
                <svg class="ic"><use href="#lstack"/></svg>
                <svg class="ic"><use href="#lstack2"/></svg>
                <svg class="ic"><use href="#lstack3"/></svg>
            </div>
            <div class="panel p-prop">
                <div class="combo c-color"><span class="swatch red"></span><span>ByLayer</span></div>
                <div class="combo c-ltype"><span class="dashline"></span><span>ByLayer</span></div>
                <div class="combo c-lw"><span class="solidline"></span><span>ByLayer</span></div>
                <div class="combo c-plot"><span>ByColor</span></div>
            </div>
        </div>
        <div class="row patch">
            <div class="panel p-dim1">
                <svg class="ic"><use href="#match"/></svg>
                <svg class="ic"><use href="#copy"/></svg>
                <svg class="ic"><use href="#layer"/></svg>
            </div>
            <div class="panel p-dim2">
                <svg class="ic"><use href="#dlin"/></svg>
                <svg class="ic"><use href="#dali"/></svg>
                <svg class="ic"><use href="#darc"/></svg>
                <svg class="ic"><use href="#dord"/></svg>
                <span class="sep"></span>
                <svg class="ic"><use href="#dradius"/></svg>
                <svg class="ic"><use href="#djog"/></svg>
                <svg class="ic"><use href="#ddia"/></svg>
                <svg class="ic"><use href="#dang"/></svg>
                <span class="sep"></span>
                <svg class="ic"><use href="#dquick"/></svg>
                <svg class="ic"><use href="#dbase"/></svg>
                <svg class="ic"><use href="#dcont"/></svg>
                <svg class="ic"><use href="#dspace"/></svg>
                <svg class="ic"><use href="#dbreak"/></svg>
                <span class="sep"></span>
                <svg class="ic"><use href="#tol"/></svg>
                <svg class="ic"><use href="#center"/></svg>
                <svg class="ic"><use href="#inspect"/></svg>
                <svg class="ic"><use href="#jog"/></svg>
                <span class="sep"></span>
                <svg class="ic"><use href="#dedit"/></svg>
                <svg class="ic"><use href="#dtext"/></svg>
                <svg class="ic"><use href="#dupd"/></svg>
            </div>
            <div class="combo c-dim"></div>
            <svg class="ic"><use href="#dstyle"/></svg>
            <div class="panel p-solid">
                <svg class="ic"><use href="#box3"/></svg>
                <svg class="ic"><use href="#box3b"/></svg>
                <svg class="ic"><use href="#box3c"/></svg>
                <span class="sep"></span>
                <svg class="ic"><use href="#wedge"/></svg>
                <svg class="ic"><use href="#movebox"/></svg>
                <svg class="ic"><use href="#rect3"/></svg>
                <svg class="ic"><use href="#cutbox"/></svg>
                <svg class="ic"><use href="#rotbox"/></svg>
                <svg class="ic"><use href="#wedge"/></svg>
                <svg class="ic"><use href="#box3c"/></svg>
                <svg class="ic"><use href="#rotbox"/></svg>
                <span class="sep"></span>
                <svg class="ic"><use href="#round3"/></svg>
                <svg class="ic"><use href="#wedge2"/></svg>
                <svg class="ic"><use href="#rect3"/></svg>
                <svg class="ic"><use href="#rotbox"/></svg>
                <span class="sep"></span>
                <svg class="ic"><use href="#boxplus"/></svg>
                <svg class="ic"><use href="#box3b"/></svg>
                <svg class="ic"><use href="#wedge"/></svg>
                <svg class="ic"><use href="#rect3"/></svg>
                <svg class="ic"><use href="#box3b"/></svg>
            </div>
        </div>
    </section>

    <main class="workspace">
        <aside class="sidebar left">
            <div class="sidepanel patch">
                <span class="grip"></span>
                <svg class="ic"><use href="#ln"/></svg>
                <svg class="ic"><use href="#xln"/></svg>
                <svg class="ic"><use href="#pln"/></svg>
                <svg class="ic"><use href="#pgon"/></svg>
                <svg class="ic"><use href="#rec"/></svg>
                <svg class="ic"><use href="#arc"/></svg>
                <svg class="ic"><use href="#cir"/></svg>
                <svg class="ic"><use href="#cloud"/></svg>
                <svg class="ic"><use href="#spl"/></svg>
                <svg class="ic"><use href="#ell"/></svg>
                <svg class="ic"><use href="#ellarc"/></svg>
                <svg class="ic"><use href="#insert"/></svg>
                <svg class="ic"><use href="#mkblock"/></svg>
                <svg class="ic"><use href="#pts"/></svg>
                <svg class="ic"><use href="#hatch"/></svg>
                <svg class="ic"><use href="#grad"/></svg>
                <svg class="ic"><use href="#region"/></svg>
                <svg class="ic"><use href="#table"/></svg>
                <span class="ic-a">A</span>
                <svg class="ic"><use href="#attr"/></svg>
            </div>
        </aside>

        <div class="canvas">
            <svg class="drawing" viewBox="32 129 1532 1172">
                <defs>
                    <text id="wm" class="wm-text">知末网 www.znzmo.com</text>
                </defs>
                <g class="frame">
                    <path class="white" d="M32 273.500H1564M32 1196H1564M176.500 129V1301M1481.500 129V1301"/>
                    <path class="magenta" d="M32 297H154.500V1174.500H32M231.500 297H1459V1174.500H231.500ZM1564 297H1536V1174.500H1564M32 1218.500H154.500V1301M231.500 1301V1218.500H1459V1301M1564 1218.500H1536V1301"/>
                    <path class="blue" d="M32 969H85M32 981H85"/>
                    <path class="red" d="M87 966V985M84 975H91"/>
                </g>

                <!-- 左段: 进水井 / 絮凝 / 沉淀 -->
                <g transform="translate(250 490) scale(.33333)" class="zoomed">
                    <path class="blue" d="M171 258H386V586M171 310H386M353 310L267 586M253 586H398V610H253Z"/>
                    <path class="cyan" d="M171 587H255M400 587H484"/>
                    <path class="dkred thick" d="M171 235V423H191L151 468H171V676"/>
                    <path class="blue" d="M484 652V310H1216M496 322V618L530 652H676M580 322V618L546 652M592 322V618L622 652M676 322V652M688 322V618L716 652H750L772 620V322M786 322V630L810 652H1170L1198 630V310M867 310V494H884V310M1214 380V652"/>
                    <path class="blue thick" d="M467 652H1232V680H467ZM467 668H1232"/>
                    <path class="white" d="M867 336H1216M867 362H1216M786 415H1198M786 475H867M884 475H1198M786 482H867M884 482H1198M786 553H1198M786 560L880 640V652M790 570L872 640V652M898 652V640L985 553M908 652V640L992 560M986 553V652M998 553V652M1000 560L1088 640V652M1105 652V640L1198 553M1114 652V640L1198 565"/>
                    <rect x="786" y="417" width="80" height="56" fill="url(#tubes)"/>
                    <rect x="884" y="417" width="314" height="56" fill="url(#tubes)"/>
                    <path class="white" d="M496 342H512M524 342H552M564 342H580M496 350H512M524 350H552M564 350H580M673 343H688M673 357H688M770 343H788M770 368H788M496 618H580M592 618H676M688 597H712M725 597H745M752 597H772M688 612H772M496 628L580 628M592 628H676M546 640V652M640 640V652M718 640V652M580 604H592"/>
                    <path class="yellow" d="M386 289H600C625 289 640 300 644 325M386 310H596C615 310 625 315 630 326"/>
                    <path class="green" stroke-dasharray="40 6 12 6" d="M386 299H598C615 299 628 306 636 326"/>
                    <path class="white" d="M510 287L540 313M540 287L510 313"/>
                    <path class="yellow" d="M510 287V313M540 287V313"/>
                    <path class="green" d="M495 290V238L460 205"/>
                    <path class="red" d="M460 205L418 160H342M316 275L345 233H419M38 278H112M190 380H282L330 432"/>
                    <path class="red thick" d="M496 325H580M592 325H676M688 325H770M786 325H866"/>
                    <path class="red" d="M1105 332V292H1140M353 652H433"/>
                    <path class="dkred" d="M415 598L440 584L465 598M425 598L440 590L455 598M353 652H433"/>
                    <g class="bubble"><circle cx="639" cy="64" r="19"/><circle class="ring" cx="639" cy="64" r="14"/><text x="634" y="73">1</text></g>
                    <g class="bubble"><circle cx="994" cy="64" r="19"/><circle class="ring" cx="994" cy="64" r="14"/><text x="988" y="73">2</text></g>
                    <path class="green dashdot" d="M639 85V268M994 85V268"/>
                    <ellipse class="red thick" cx="352" cy="445" rx="11" ry="16"/>
                    <ellipse class="red thick" cx="332" cy="458" rx="13" ry="17"/>
                    <ellipse class="red thick" cx="352" cy="476" rx="16" ry="11"/>
                    <path class="solidred" d="M522 325h20l-10 10zM620 325h20l-10 10zM716 325h20l-10 10zM810 325h20l-10 10zM704 301h20l-10 10zM974 301h20l-10 10zM980 408h20l-10 10zM370 645h20l-10 9zM1052 545h20l-10 10zM624 610h20l-10 10zM1096 326h20l-10 8z"/>
                    <g class="cadtext">
                        <text x="362" y="154" textLength="47" lengthAdjust="spacingAndGlyphs">?????</text>
                        <text x="325" y="224" textLength="88" lengthAdjust="spacingAndGlyphs">C20?????</text>
                        <text x="48" y="266" textLength="57" lengthAdjust="spacingAndGlyphs">??????</text>
                        <text x="200" y="372" textLength="98" lengthAdjust="spacingAndGlyphs">M7.5?????</text>
                        <text x="417" y="452" textLength="39" lengthAdjust="spacingAndGlyphs">????</text>
                        <text x="508" y="262" textLength="94" lengthAdjust="spacingAndGlyphs">DN300 ???</text>
                        <text x="705" y="297" textLength="37" lengthAdjust="spacingAndGlyphs">5.00</text>
                        <text x="973" y="298" textLength="37" lengthAdjust="spacingAndGlyphs">5.00</text>
                        <text x="1105" y="286" textLength="37" lengthAdjust="spacingAndGlyphs">4.60</text>
                        <text x="977" y="406" textLength="28" lengthAdjust="spacingAndGlyphs">140</text>
                        <text x="1053" y="541" textLength="33" lengthAdjust="spacingAndGlyphs">1.30</text>
                        <text x="622" y="607" textLength="37" lengthAdjust="spacingAndGlyphs">0.30</text>
                        <text x="430" y="575" textLength="37" lengthAdjust="spacingAndGlyphs">0.80</text>
                        <text x="362" y="640" textLength="50" lengthAdjust="spacingAndGlyphs">-0.20</text>
                    </g>
                    <use href="#gnd" x="623" y="678" width="50" height="16"/>
                    <use href="#gnd" x="850" y="678" width="50" height="16"/>
                </g>

                <!-- 中段: 滤池 / 清水池 -->
                <g transform="translate(650 490) scale(.33333)" class="zoomed">
                    <path class="white" d="M15 308H55L380 323H708M55 374H380M107 312V372M145 322H163M0 340H15M0 360H15"/>
                    <path class="blue" d="M57 310V374M145 322V590L130 620V643H740V618M163 322V598L195 620H395L428 598V322M443 322V590L475 620H678L708 598V322M722 322V600M15 378H490V322M380 322V378M0 310H15V372M15 378V650H33V678H0M443 380V590"/>
                    <path class="blue thick" d="M130 642H742M427 322V380M722 322V600M145 322V380"/>
                    <path class="cyan" d="M15 587H145M722 587H942"/>
                    <path class="white" d="M163 527H428M445 527H708M163 573H428M445 573H708M163 580H428M445 580H708M163 590H428M445 590H708M197 592V620M203 592V620M225 592V620M233 592V620M258 592V620M266 592V620M295 592V620M302 592V620M328 592V620M335 592V620M360 592V620M367 592V620M392 592V620M398 592V620M478 592V620M484 592V620M508 592V620M516 592V620M542 592V620M548 592V620M575 592V620M582 592V620M610 592V620M617 592V620M640 592V620M648 592V620M675 592V620M212 487V520H246V487M220 487V513H238V487M344 487V520H378V487M352 487V513H370V487M492 487V520H526V487M500 487V513H518V487M625 487V520H659V487M633 487V513H651V487"/>
                    <path class="yellow" d="M676 598H885M676 618H885M676 598V618M885 618C905 618 915 600 915 580V550C915 535 920 535 922 535M885 598C892 598 893 590 893 570V550C893 525 910 514 922 514M922 514H955V535H922"/>
                    <path class="green" d="M676 608H890C903 608 904 590 904 570V550C904 530 915 525 955 525M842 508V598"/>
                    <path class="white thick" d="M885 596V622M922 510V538M892 547H916"/>
                    <path class="red" d="M245 343L290 295H337M768 421H842V505M65 638H128M245 625V562H295M245 488H297M388 378H422"/>
                    <path class="blue" d="M942 465H1200M955 672V490L965 478H1200M942 465V665L920 685H1200M955 672H1200"/>
                    <path class="blue thick" d="M920 690H1200"/>
                    <path class="dkred thick" d="M955 488H1200"/>
                    <g class="bubble"><circle cx="436" cy="64" r="19"/><circle class="ring" cx="436" cy="64" r="14"/><text x="431" y="73">3</text></g>
                    <path class="green dashdot" d="M436 85V268"/>
                    <path class="solidred" d="M18 362h20l-10 10zM396 368h20l-10 10zM586 318h20l-10 8zM285 518h20l-10 9zM258 550h20l-10 10zM88 632h20l-10 8zM800 578h20l-10 8zM836 503h10v10h-10z"/>
                    <g class="cadtext">
                        <text x="303" y="275" textLength="27" lengthAdjust="spacingAndGlyphs">???</text>
                        <text x="585" y="312" textLength="37" lengthAdjust="spacingAndGlyphs">4.80</text>
                        <text x="388" y="364" textLength="37" lengthAdjust="spacingAndGlyphs">4.00</text>
                        <text x="15" y="361" textLength="37" lengthAdjust="spacingAndGlyphs">4.05</text>
                        <text x="258" y="478" textLength="38" lengthAdjust="spacingAndGlyphs">2.30</text>
                        <text x="284" y="514" textLength="36" lengthAdjust="spacingAndGlyphs">1.70</text>
                        <text x="256" y="549" textLength="38" lengthAdjust="spacingAndGlyphs">0.30</text>
                        <text x="78" y="627" textLength="50" lengthAdjust="spacingAndGlyphs">±0.00</text>
                        <text x="770" y="396" textLength="85" lengthAdjust="spacingAndGlyphs">?????????</text>
                        <text x="792" y="576" textLength="38" lengthAdjust="spacingAndGlyphs">0.80</text>
                        <text x="788" y="647" textLength="56" lengthAdjust="spacingAndGlyphs">DN300</text>
                    </g>
                    <use href="#gnd" x="35" y="592" width="50" height="16"/>
                    <use href="#gnd" x="60" y="592" width="50" height="16"/>
                    <use href="#gnd" x="430" y="644" width="50" height="16"/>
                    <use href="#gnd" x="515" y="644" width="50" height="16"/>
                </g>

                <!-- 右段: 泵房 / 出水 -->
                <g transform="translate(1040 600) scale(.33333)" class="zoomed">
                    <path class="blue" d="M0 135H543V318L562 345V355M0 147H518L530 160V343H0M0 355H420L433 372V408H525V345L543 318M0 363H415L425 375V430H568V355H530L522 365V422M443 343V408M443 343H512V408"/>
                    <path class="dkred thick" d="M0 158H528"/>
                    <path class="dkred" d="M115 160H165M122 166H158M130 172H150"/>
                    <path class="cyan thick" d="M545 257H1028"/>
                    <path class="yellow" d="M505 283H705L713 296L705 311H505M505 283C480 285 465 300 462 325M505 311C498 311 495 318 495 325M462 325L458 385M495 325L500 385"/>
                    <path class="green" d="M505 295H740M505 295C485 298 478 312 478 325V385"/>
                    <path class="white thick" d="M504 277V315M460 325H497M443 343H512M458 385H500M458 405H500M464 385V407M478 385V407M492 385V407"/>
                    <path class="cyan" d="M537 275V318"/>
                    <path class="olive" d="M522 404H658"/>
                    <path class="green" d="M500 404H688"/>
                    <path class="yellow" d="M658 397V410"/>
                    <path class="red" d="M635 285L660 233H750M762 295H845"/>
                    <path class="solidred" d="M840 290l16 5-16 5zM862 248h20l-10 10zM130 128h18l-9 9z"/>
                    <g class="cadtext">
                        <text x="125" y="124" textLength="38" lengthAdjust="spacingAndGlyphs">2.80</text>
                        <text x="667" y="225" textLength="83" lengthAdjust="spacingAndGlyphs">DN400???</text>
                        <text x="858" y="245" textLength="38" lengthAdjust="spacingAndGlyphs">0.30</text>
                        <text x="783" y="279" textLength="57" lengthAdjust="spacingAndGlyphs">??????</text>
                        <text x="588" y="382" textLength="80" lengthAdjust="spacingAndGlyphs">DN150???</text>
                    </g>
                    <use href="#gnd" x="72" y="362" width="50" height="16"/>
                    <use href="#gnd" x="145" y="362" width="50" height="16"/>
                    <use href="#gnd" x="905" y="256" width="50" height="16"/>
                    <g class="bubble"><circle cx="162" cy="-267" r="19"/><circle class="ring" cx="162" cy="-267" r="14"/><text x="157" y="-258">4</text></g>
                    <path class="green dashdot" d="M162 -246V-63"/>
                </g>

                <!-- 设备表 -->
                <g transform="translate(350 930) scale(.33333)" class="zoomed">
                    <path class="red thick" d="M40 35H667V365H40ZM153 35V365M313 35V365M40 100H667M40 167H667M40 233H667M40 298H667"/>
                    <g class="bubble"><circle cx="95" cy="135" r="19"/><circle class="ring" cx="95" cy="135" r="14"/><text x="90" y="144">1</text></g>
                    <g class="bubble"><circle cx="95" cy="200" r="19"/><circle class="ring" cx="95" cy="200" r="14"/><text x="90" y="209">2</text></g>
                    <g class="bubble"><circle cx="95" cy="266" r="19"/><circle class="ring" cx="95" cy="266" r="14"/><text x="90" y="275">3</text></g>
                    <g class="bubble"><circle cx="95" cy="332" r="19"/><circle class="ring" cx="95" cy="332" r="14"/><text x="90" y="341">4</text></g>
                    <g class="cadtext table-text">
                        <text x="72" y="77">?</text><text x="113" y="77">?</text><text x="208" y="77">?</text><text x="236" y="77">?</text><text x="420" y="77">?</text><text x="530" y="77">?</text>
                        <text x="207" y="142" textLength="40" lengthAdjust="spacingAndGlyphs">???</text>
                        <text x="210" y="208" textLength="40" lengthAdjust="spacingAndGlyphs">???</text>
                        <text x="204" y="273" textLength="52" lengthAdjust="spacingAndGlyphs">????</text>
                        <text x="209" y="340" textLength="40" lengthAdjust="spacingAndGlyphs">???</text>
                        <text x="360" y="142" textLength="52" lengthAdjust="spacingAndGlyphs">????</text>
                        <text transform="translate(436 142) scale(.78 1)">???????250m</text>
                        <text transform="translate(606 146) scale(.8 1)">/h</text>
                        <text x="360" y="208" textLength="52" lengthAdjust="spacingAndGlyphs">????</text>
                        <text transform="translate(436 208) scale(.78 1)">???????250m</text>
                        <text transform="translate(606 212) scale(.8 1)">/h</text>
                        <text x="360" y="273" textLength="52" lengthAdjust="spacingAndGlyphs">????</text>
                        <text transform="translate(438 273) scale(.77 1)">???????125m</text>
                        <text transform="translate(606 280) scale(.8 1)">/h</text>
                        <text x="385" y="338" textLength="143" lengthAdjust="spacingAndGlyphs">??????300m</text>
                        <text x="540" y="324" class="sup">3</text>
                    </g>
                </g>

                <!-- 图名 -->
                <rect class="mtext-box" x="736" y="854" width="136" height="31"/>
                <text class="mtext" transform="translate(738 877) scale(.69 1)">水厂工艺流程断面图</text>
                <path class="cyan" d="M737 884H881"/>
                <path class="white" d="M737 887.500H881"/>

                <g class="notes">
                    <text x="1165" y="905" textLength="13" lengthAdjust="spacingAndGlyphs">???</text>
                    <text x="1187" y="923" textLength="87" lengthAdjust="spacingAndGlyphs">1????????????????????</text>
                    <text x="1178" y="938" textLength="57" lengthAdjust="spacingAndGlyphs">2?????????????</text>
                    <text x="1181" y="953" textLength="66" lengthAdjust="spacingAndGlyphs">3?????????????</text>
                </g>

                <!-- 下方图框露出的尺寸 -->
                <path class="red" d="M370 1264H900M898 1258V1270"/>
                <path class="red" d="M378 1275V1301M388 1275V1301M370 1281H900M463 1275V1301M472 1275V1301M549 1275V1301M560 1275V1301M630 1275V1301M642 1275V1301M661 1290V1301M888 1275V1301M898 1275V1301"/>
                <g class="dims">
                    <text x="635" y="1262" text-anchor="middle">11900</text>
                    <text x="378" y="1276" text-anchor="middle">400</text>
                    <text x="421" y="1276" text-anchor="middle">3500</text>
                    <text x="463" y="1276" text-anchor="middle">400</text>
                    <text x="506" y="1276" text-anchor="middle">3500</text>
                    <text x="549" y="1276" text-anchor="middle">400</text>
                    <text x="592" y="1276" text-anchor="middle">1225</text>
                    <text x="635" y="1276" text-anchor="middle">640</text>
                    <text x="764" y="1276" text-anchor="middle">5575</text>
                    <text x="893" y="1276" text-anchor="middle">400</text>
                </g>
                <path class="red" d="M36 1275H92M88 1275V1301M60 1287V1298M50 1287H68M50 1298H68M52 1260V1274M36 1285V1292"/>

                <!-- UCS -->
                <g class="ucs">
                    <path d="M60 1224V1268M65 1272H109M55 1268H64V1277H55Z"/>
                    <path d="M62 1207L67 1214L72 1207M67 1214V1221"/>
                    <path d="M114 1259L125 1272M125 1259L114 1272"/>
                </g>

                <g class="watermark">
                    <use href="#wm" transform="translate(-131 750) rotate(-45)"/>
                    <use href="#wm" transform="translate(417 750) rotate(-45)"/>
                    <use href="#wm" transform="translate(968 750) rotate(-45)"/>
                    <use href="#wm" transform="translate(1519 750) rotate(-45)"/>
                    <use href="#wm" transform="translate(12 383) rotate(-45)"/>
                    <use href="#wm" transform="translate(565 383) rotate(-45)"/>
                    <use href="#wm" transform="translate(1116 383) rotate(-45)"/>
                    <use href="#wm" transform="translate(269 1118) rotate(-45)"/>
                    <use href="#wm" transform="translate(820 1118) rotate(-45)"/>
                    <use href="#wm" transform="translate(1366 1118) rotate(-45)"/>
                </g>
            </svg>

            <div class="cmd-msg">当前设置: 编辑模式 = Multiple</div>
            <div class="cmd">
                <div class="cmd-handle">
                    <span class="grip-v"></span>
                    <svg class="ic"><use href="#close"/></svg>
                    <svg class="ic wrench" viewBox="0 0 20 20"><path fill="currentColor" stroke="none" d="M3 18l8-9c-1-4 2-7 6-6l-3 3 1 2 2 1 3-2c0 4-4 6-7 5l-8 8z"/></svg>
                </div>
                <div class="cmd-line">
                    <span class="cmd-icon">A</span><span class="cmd-caret"></span>
                    <b>TEXTEDIT</b>
                    <span>选择注释对象或</span><span class="bracket">[</span><span class="opt">放弃(<em>U</em>)</span><span class="opt">模式(<em>M</em>)</span><span class="bracket-end">]:</span>
                    <span class="cmd-up"></span>
                </div>
            </div>
        </div>

        <aside class="sidebar right">
            <div class="sidepanel patch">
                <span class="grip"></span>
                <svg class="ic"><use href="#erase"/></svg>
                <svg class="ic"><use href="#cpy"/></svg>
                <svg class="ic"><use href="#mirror"/></svg>
                <svg class="ic"><use href="#offs"/></svg>
                <svg class="ic"><use href="#arr"/></svg>
                <svg class="ic"><use href="#mv"/></svg>
                <svg class="ic"><use href="#rot"/></svg>
                <svg class="ic"><use href="#scl"/></svg>
                <svg class="ic"><use href="#stretch"/></svg>
                <svg class="ic"><use href="#trm"/></svg>
                <svg class="ic"><use href="#ext"/></svg>
                <svg class="ic"><use href="#brk"/></svg>
                <svg class="ic"><use href="#brk2"/></svg>
                <svg class="ic"><use href="#jn"/></svg>
                <svg class="ic"><use href="#chm"/></svg>
                <svg class="ic"><use href="#flt"/></svg>
                <svg class="ic"><use href="#blnd"/></svg>
                <svg class="ic"><use href="#expl"/></svg>
            </div>
        </aside>
    </main>

    <footer class="statusbar">
        <div class="layouts">
            <span class="ltab active">模型</span><span class="ltab">布局1</span><span class="ltab">布局2</span><span class="ltab add">+</span>
        </div>
        <div class="spanel s-coord">27694.216, 5236.185, 0.000</div>
        <div class="spanel s-model">模型</div>
        <div class="spanel s-grid">
            <svg class="ic"><use href="#grid"/></svg>
            <svg class="ic"><use href="#snap"/></svg>
            <span class="caret"></span>
        </div>
        <div class="spanel s-draft">
            <svg class="ic"><use href="#infer"/></svg>
            <svg class="ic on"><use href="#dyn"/></svg>
            <svg class="ic"><use href="#ortho"/></svg>
            <svg class="ic"><use href="#polar"/></svg><span class="caret"></span>
            <svg class="ic"><use href="#iso"/></svg><span class="caret"></span>
            <svg class="ic"><use href="#osnap"/></svg>
            <svg class="ic on"><use href="#ortho3"/></svg><span class="caret"></span>
            <svg class="ic"><use href="#lw"/></svg>
            <svg class="ic on"><use href="#trans"/></svg>
            <svg class="ic"><use href="#cycle"/></svg>
            <svg class="ic"><use href="#obj3"/></svg><span class="caret"></span>
        </div>
        <div class="spanel s-ucs">
            <svg class="ic"><use href="#dynucs"/></svg>
            <svg class="ic"><use href="#sel"/></svg><span class="caret"></span>
            <svg class="ic on"><use href="#gizmo"/></svg><span class="caret"></span>
        </div>
        <div class="spanel s-anno">
            <svg class="ic on"><use href="#annos"/></svg>
            <svg class="ic"><use href="#annos2"/></svg>
            <svg class="ic"><use href="#annos3"/></svg>
            <span class="scale">1:1 / 100%</span><span class="caret"></span>
        </div>
        <div class="spanel s-gear"><svg class="ic"><use href="#gear"/></svg><span class="caret"></span></div>
        <div class="spanel s-plus"><svg class="ic"><use href="#plus"/></svg></div>
        <div class="spanel s-units"><svg class="ic"><use href="#ruler"/></svg><span class="units">小数</span><span class="caret"></span></div>
        <div class="spanel s-qp"><svg class="ic"><use href="#qprops"/></svg></div>
        <div class="spanel s-lock"><svg class="ic"><use href="#lockui"/></svg><span class="caret"></span></div>
        <div class="spanel s-iso"><svg class="ic"><use href="#isolate"/></svg></div>
        <div class="spanel s-hw"><svg class="ic"><use href="#hw"/></svg></div>
        <div class="spanel s-net"><svg class="ic"><use href="#net"/></svg><svg class="ic"><use href="#warn"/></svg></div>
        <div class="spanel s-end"><svg class="ic"><use href="#full"/></svg><svg class="ic"><use href="#burger"/></svg></div>
    </footer>
</div>

<div class="stamp">
    <div class="stamp-cn">知末</div>
    <div class="stamp-id">ID: 1172193479</div>
</div>
</body>
</html>
```

FILE: styles.css
```css
html, body {
    margin: 0;
    padding: 0;
    background: #000;
}
body {
    position: relative;
    width: 1600px;
    height: 1333px;
    overflow: hidden;
    font-family: "Noto Sans", "Noto Sans CJK SC", sans-serif;
    color: #d8dce2;
}
.defs {
    position: absolute;
}
.app {
    display: flex;
    flex-direction: column;
    width: 1600px;
    height: 1333px;
    box-sizing: border-box;
    border: 2px solid #0a9ad9;
    background: #222a36;
}

/* shared icon */
.ic {
    flex: none;
    width: 18px;
    height: 18px;
    margin: 0 2.3px;
    color: #dcdcdc;
    fill: none;
    stroke: currentColor;
    stroke-width: 1.2;
}
.ic.off {
    color: #6d7480;
}
.caret {
    flex: none;
    width: 0;
    height: 0;
    margin: 0 3px;
    border-left: 3px solid transparent;
    border-right: 3px solid transparent;
    border-top: 4px solid #cfd3d9;
}
.caret.bar {
    border-top-color: #cfd3d9;
    box-shadow: 0 -3px 0 #cfd3d9;
}

/* title bar */
.titlebar {
    display: flex;
    align-items: center;
    flex: none;
    height: 26px;
}
.logo {
    width: 22px;
    height: 22px;
    margin-left: 2px;
    color: #c8201c;
    font: bold 20px/22px "Liberation Sans", sans-serif;
    text-align: center;
}
.titlebar .caret {
    margin: 0 3px;
}
.qat {
    display: flex;
    align-items: center;
    margin-left: 11px;
    width: 319px;
}
.qat .ic {
    width: 18px;
    height: 18px;
    margin: 0 2.6px;
}
.qat .ic:nth-last-of-type(1) {
    margin-left: 5px;
}
.share {
    margin-left: 1px;
    font-size: 12px;
    color: #b9dcf3;
}
.title {
    display: flex;
    align-items: center;
    gap: 16px;
    margin-left: 163px;
    font-size: 12.2px;
    color: #e6e6e6;
}
.title-doc {
    font-size: 11.7px;
}
.infocenter {
    display: flex;
    align-items: center;
    margin-left: auto;
}
.more {
    width: 0;
    height: 0;
    margin-right: 7px;
    border-top: 4px solid transparent;
    border-bottom: 4px solid transparent;
    border-left: 4px solid #cfd3d9;
}
.search {
    width: 170px;
    height: 19px;
    padding-left: 4px;
    background: #424b5c;
    color: #9aa2ae;
    font-size: 12px;
    font-style: italic;
    line-height: 19px;
}
.infocenter .ic {
    width: 16px;
    height: 16px;
    margin: 0 3px;
}
.infocenter .search + .ic {
    margin-left: 4px;
}
.account {
    margin-left: 1px;
    font-size: 11.8px;
}
.infocenter .account + .caret {
    margin: 0 8px 0 4px;
}
.vsep {
    width: 1px;
    height: 18px;
    margin: 0 6px 0 4px;
    background: #555e6c;
}
.winbtns {
    display: flex;
    gap: 6px;
    margin: 0 3px 0 64px;
}
.winbtns .ic {
    margin: 0;
    width: 18px;
    height: 18px;
}

/* menu */
.menubar {
    display: flex;
    align-items: center;
    flex: none;
    gap: 23.5px;
    height: 19px;
    padding-left: 15px;
    font-size: 12px;
    color: #c9ced6;
    border-bottom: 1px solid #2e3744;
    box-sizing: border-box;
}
.docbtns {
    display: flex;
    margin-left: auto;
    margin-right: 0;
}
.docbtns .ic {
    width: 15px;
    height: 15px;
    margin: 0 2.500px;
}

/* file tabs */
.tabs {
    display: flex;
    flex: none;
    align-items: flex-end;
    height: 25px;
    padding-left: 18px;
    background: #1f2631;
}
.tab {
    display: flex;
    align-items: center;
    width: 125px;
    height: 24px;
    box-sizing: border-box;
    padding-left: 15px;
    background: #2e3643;
    border-radius: 7px 7px 0 0;
    font-size: 12.5px;
    color: #aab0ba;
}
.tab.active {
    width: 190px;
    padding-left: 10px;
    background: #3b4453;
    color: #e9ebee;
    font-size: 11.7px;
}
.x {
    margin-left: 7px;
    font-size: 16px;
    color: #c5c9cf;
}
.tab-add {
    margin: 0 0 2px 0;
    width: 24px;
    font-size: 16px;
    text-align: center;
    color: #b5bac2;
    background: #2e3643;
    border-radius: 4px;
}

/* toolbars */
.toolbars {
    flex: none;
    display: flex;
    flex-direction: column;
    gap: 4px;
    height: 57px;
    box-sizing: border-box;
    padding: 4px 0 0 2px;
    background: #3b4453;
}
.row {
    display: flex;
    align-items: center;
    height: 22px;
}
.panel {
    display: flex;
    align-items: center;
    flex: none;
    height: 22px;
    box-sizing: border-box;
    padding-left: 1px;
    border: 1px solid #2b3340;
}
.panel::before {
    content: "";
    flex: none;
    width: 0;
    height: 16px;
    margin-right: 3px;
    border-left: 2px dotted #8a93a1;
}
.p-std {
    width: 631px;
    padding-left: 3px;
}
.sep {
    flex: none;
    width: 1px;
    height: 20px;
    margin: 0 2px;
    background: #cfd3d9;
}
.p-solid .sep {
    margin: 0 1.500px;
}
.p-layer {
    width: 386px;
    margin-left: 2px;
}
.p-layer .ic {
    margin: 0 4px 0 0;
}
.p-prop {
    flex: 1;
    padding: 0;
    gap: 6px;
    border: 0;
}
.combo {
    display: flex;
    align-items: center;
    flex: none;
    position: relative;
    height: 21px;
    box-sizing: border-box;
    padding-left: 2px;
    background: #fbfbfb;
    color: #6d6d6d;
    font-size: 12px;
}
.combo::after {
    content: "";
    position: absolute;
    right: 7px;
    top: 6px;
    width: 5px;
    height: 5px;
    border-right: 1px solid #b4b4b4;
    border-bottom: 1px solid #b4b4b4;
    transform: rotate(45deg);
}
.p-layer .combo .ic {
    width: 15px;
    height: 15px;
    margin: 0 3px 0 1px;
    color: #555;
}
.layercombo {
    width: 292px;
    margin: 0 1px 0 0;
    padding-left: 3px;
}
.swatch {
    flex: none;
    width: 13px;
    height: 13px;
    margin-right: 4px;
    border: 1px solid #222;
}
.swatch.green {
    background: #00e000;
    margin-left: 0;
}
.swatch.red {
    background: #f00000;
}
.c-color {
    width: 146px;
}
.c-ltype {
    width: 155px;
    padding-left: 5px;
}
.c-lw {
    width: 121px;
    padding-left: 5px;
}
.c-plot {
    width: 116px;
    padding-left: 10px;
}
.dashline {
    width: 57px;
    height: 2px;
    margin-right: 6px;
    background: repeating-linear-gradient(90deg, #666 0 22px, transparent 22px 25px, #666 25px 29px, transparent 29px 32px);
}
.solidline {
    width: 35px;
    margin-right: 4px;
    border-top: 2px solid #666;
}
.patch .ic {
    background: #454a52;
}
.p-dim1 {
    width: 75px;
}
.p-dim2 {
    width: 482px;
    margin-left: 3px;
}
.c-dim {
    width: 119px;
    margin-left: 1px;
}
.p-solid {
    width: 475px;
    margin-left: 1px;
}

/* main area */
.workspace {
    display: flex;
    flex: none;
    height: 1172px;
}
.sidebar {
    flex: none;
    background: #3b4453;
}
.sidebar.left {
    width: 30px;
}
.sidebar.right {
    width: 34px;
}
.sidepanel {
    display: flex;
    flex-direction: column;
    align-items: center;
    width: 24px;
    box-sizing: border-box;
    border: 1px solid #2b3340;
    padding-bottom: 3px;
}
.left .sidepanel {
    margin-left: 2px;
}
.right .sidepanel {
    margin-left: 5px;
}
.sidepanel .ic {
    margin: 1.650px 0;
}
.grip {
    width: 16px;
    height: 3px;
    margin: 3px 0 1px;
    border-top: 1px dotted #aab;
    border-bottom: 1px dotted #aab;
}
.ic-a {
    width: 18px;
    height: 18px;
    margin: 1.650px 0;
    color: #ddd;
    font: 19px/18px "Liberation Sans", sans-serif;
    text-align: center;
}
.canvas {
    position: relative;
    flex: none;
    width: 1532px;
    height: 1172px;
    overflow: hidden;
    background: #000;
}
.drawing {
    display: block;
    width: 1532px;
    height: 1172px;
}

/* drawing */
.drawing path,
.drawing ellipse {
    fill: none;
}
.frame .white {
    stroke: #dcdcdc;
    stroke-width: 1.300;
}
.frame .magenta {
    stroke: #b400b4;
    stroke-width: 1.500;
}
.blue {
    stroke: #0000f0;
    stroke-width: 1.200;
}
.white {
    stroke: #d2d2d2;
    stroke-width: 1;
}
.red {
    stroke: #e00000;
    stroke-width: 1;
}
.dkred {
    stroke: #b00000;
    stroke-width: 1;
}
.cyan {
    stroke: #0aa6a6;
    stroke-width: 1;
}
.green {
    stroke: #00b400;
    stroke-width: 1;
}
.yellow {
    stroke: #d6d600;
    stroke-width: 1;
}
.olive {
    stroke: #8a8a10;
    stroke-width: 1;
}
.zoomed .white,
.zoomed .red,
.zoomed .dkred,
.zoomed .cyan,
.zoomed .green,
.zoomed .yellow {
    stroke-width: 3.200;
}
.zoomed .blue {
    stroke-width: 3.800;
}
.zoomed .thick {
    stroke-width: 4.500;
}
.zoomed .olive {
    stroke-width: 12;
}
.dashdot {
    stroke-dasharray: 42 8 12 8;
}
.drawing .solidred {
    fill: #e00000;
}
.bubble circle {
    fill: none;
    stroke: #c00000;
    stroke-width: 5;
}
.bubble .ring {
    stroke: #00b8c8;
    stroke-width: 3.500;
}
.bubble text {
    fill: #b00000;
    font: 26px "Liberation Sans", sans-serif;
}
.cadtext text {
    fill: #f00000;
    stroke: #f00000;
    stroke-width: .8;
    font: 28px "Liberation Sans", sans-serif;
}
.table-text text {
    font-size: 31px;
}
.table-text .sup {
    font-size: 14px;
}
.mtext-box {
    fill: #1f3a5a;
    stroke: #333a40;
    stroke-width: 1;
}
.mtext {
    fill: #a30f32;
    font: 500 21px "Noto Sans CJK SC", sans-serif;
}
.notes text {
    fill: #e00000;
    stroke: #e00000;
    stroke-width: .25;
    font: 11px "Liberation Sans", sans-serif;
}
.dims text {
    fill: #d80000;
    font: 8px "Liberation Sans", sans-serif;
}
.ucs path {
    stroke: #dcdcdc;
    stroke-width: 1.100;
}
.wm-text {
    font: bold 32px "DejaVu Sans", "Noto Sans CJK SC", sans-serif;
    letter-spacing: -1px;
}
.watermark {
    fill: #3c3c3c;
    opacity: .7;
}

/* command line, floats over the drawing */
.cmd-msg {
    position: absolute;
    left: 296px;
    top: 1128px;
    padding: 0 3px;
    height: 15px;
    border-radius: 3px;
    background: rgba(90, 90, 90, .85);
    color: #c2c2c2;
    font: 12px/15px "DejaVu Sans Mono", "Noto Sans CJK SC", monospace;
    white-space: nowrap;
}
.cmd {
    position: absolute;
    left: 236px;
    top: 1146px;
    display: flex;
    width: 1061px;
    height: 25px;
}
.cmd-handle {
    display: flex;
    align-items: center;
    width: 54px;
    background: #222a36;
    border-radius: 3px 0 0 3px;
}
.grip-v {
    width: 4px;
    height: 18px;
    margin-left: 4px;
    border-left: 2px dotted #9aa;
    border-right: 2px dotted #9aa;
}
.cmd-handle .ic {
    width: 12px;
    height: 14px;
    margin: 0 0 0 5px;
    color: #8a919c;
}
.cmd-handle .wrench {
    width: 18px;
    height: 18px;
    margin-left: 4px;
}
.cmd-line {
    position: relative;
    display: flex;
    align-items: center;
    flex: 1;
    padding-left: 10px;
    background: rgba(182, 182, 182, .86);
    border-top: 1px solid #d0d0d0;
    border-radius: 0 3px 3px 0;
    color: #1c1c1c;
    font: 12.500px "Liberation Sans", "Noto Sans CJK SC", sans-serif;
}
.cmd-line b {
    margin: 0 5px 0 5px;
    font: bold 11.500px "Liberation Mono", monospace;
}
.cmd-icon {
    color: #a58a8a;
    font: italic 15px "Liberation Sans", sans-serif;
}
.cmd-caret {
    margin-left: 3px;
    border-left: 3px solid transparent;
    border-right: 3px solid transparent;
    border-top: 4px solid #777;
}
.bracket {
    margin-left: 8px;
}
.bracket-end {
    margin-left: 3px;
}
.opt {
    margin-left: 3px;
    padding: 0 2px;
    background: #9c9c9c;
    border-radius: 3px;
    font-size: 13px;
}
.opt em {
    color: #1e3fb0;
    font-style: normal;
}
.cmd-up {
    position: absolute;
    right: 4px;
    top: 9px;
    border-left: 4px solid transparent;
    border-right: 4px solid transparent;
    border-bottom: 5px solid #555;
}

/* status bar */
.statusbar {
    display: flex;
    align-items: flex-start;
    flex: none;
    gap: 2.500px;
    height: 30px;
    box-sizing: border-box;
    padding-top: 1.500px;
    background: #222a36;
    border-top: 1px solid #4a5361;
}
.layouts {
    display: flex;
    width: 357px;
    height: 15px;
    padding-left: 12px;
    box-sizing: border-box;
}
.ltab {
    width: 48px;
    height: 15px;
    margin-right: 2px;
    background: #2f3744;
    border-radius: 0 0 7px 7px;
    color: #b0b5bd;
    font-size: 12.500px;
    line-height: 15px;
    text-align: center;
}
.ltab.active {
    background: #3b4453;
    color: #eceef0;
    font-weight: 700;
}
.ltab.add {
    width: 18px;
    margin-left: 8px;
}
.spanel {
    display: flex;
    align-items: center;
    justify-content: space-between;
    flex: none;
    height: 23.500px;
    box-sizing: border-box;
    padding: 0 2px;
    background: #3b4453;
    font-size: 12.500px;
    color: #e3e5e8;
}
.spanel .ic {
    width: 18px;
    height: 20px;
    margin: 0 1px;
}
.spanel .ic.on {
    width: 22px;
    height: 23.500px;
    background: #4f86bd;
    padding: 2px;
    box-sizing: border-box;
    color: #fff;
}
.spanel .caret {
    margin: 0 1px;
}
.s-coord { width: 176px; justify-content: flex-end; padding-right: 5px; letter-spacing: -.5px; }
.s-model { width: 29px; }
.s-grid { width: 62px; }
.s-draft { width: 326px; }
.s-ucs { width: 101px; }
.s-anno { width: 141px; padding-left: 0; }
.s-gear { width: 39px; }
.s-plus { width: 24px; }
.s-units { width: 95px; }
.s-qp { width: 23px; }
.s-lock { width: 38px; }
.s-iso { width: 25px; }
.s-hw { width: 24px; background: #55697f; }
.s-net { width: 46px; }
.s-end { width: 48px; }
.scale {
    font-size: 11.500px;
    letter-spacing: -.300px;
}
.units {
    margin-right: 14px;
}
.stamp {
    position: absolute;
    left: 1361px;
    top: 1197px;
    width: 239px;
    pointer-events: none;
}
.stamp-cn {
    margin-left: 46px;
    color: rgba(228, 228, 228, .9);
    font: 500 62px/68px "Noto Sans CJK SC", sans-serif;
}
.stamp-id {
    margin-top: 11px;
    color: #fff;
    font: 500 32px/38px "Roboto", sans-serif;
    white-space: nowrap;
}
```
